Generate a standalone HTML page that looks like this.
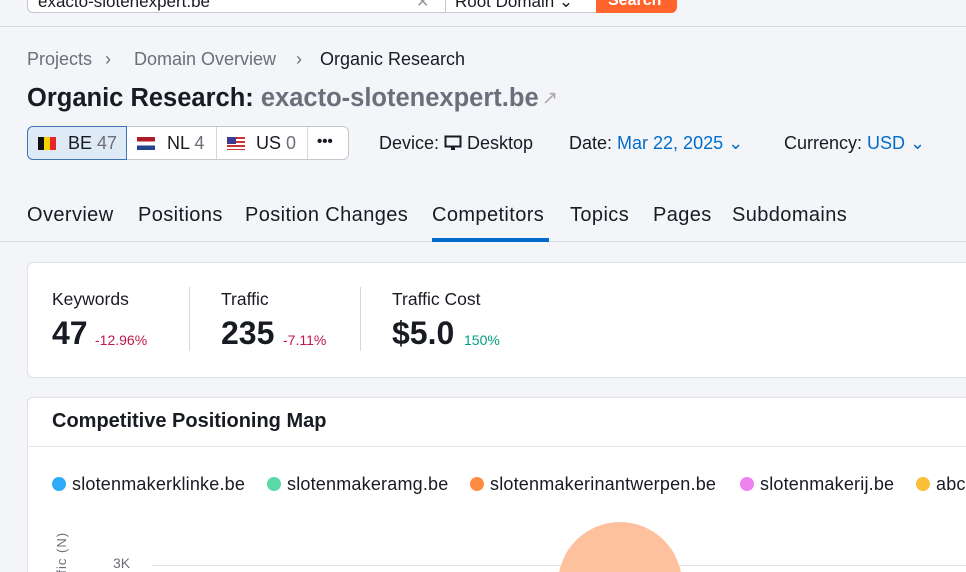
<!DOCTYPE html>
<html><head><style>
*{margin:0;padding:0;box-sizing:border-box}
html,body{width:966px;height:572px;overflow:hidden}
body{background:#f4f5f9;font-family:"Liberation Sans",sans-serif;color:#191b23;position:relative}
.a{position:absolute;white-space:nowrap}
.gray{color:#6c6e79}
.blue{color:#006dca}
.tab{position:absolute;top:204px;font-size:20px;letter-spacing:0.4px;white-space:nowrap}
.dot{position:absolute;top:477px;width:14px;height:14px;border-radius:50%}
.lg{position:absolute;top:474px;font-size:18px;letter-spacing:0.2px;white-space:nowrap}
</style></head><body>
<div class="a" style="left:27px;top:-14px;width:419px;height:27px;background:#fff;border:1px solid #c4c7cf;border-radius:0 0 0 6px"></div>
<div class="a" style="left:38px;top:-8px;font-size:17px">exacto-slotenexpert.be</div>
<div class="a" style="left:416px;top:-8px;font-size:16px;color:#999">✕</div>
<div class="a" style="left:445px;top:-14px;width:152px;height:27px;background:#fff;border:1px solid #c4c7cf"></div>
<div class="a" style="left:455px;top:-8px;font-size:17px">Root Domain ⌄</div>
<div class="a" style="left:596px;top:-14px;width:81px;height:27px;background:#ff642d;border-radius:0 0 6px 0;color:#fff;font-weight:bold;font-size:16px;padding:6px 0 0 12px">Search</div>
<div class="a" style="left:0;top:26px;width:966px;height:1px;background:#d6d8de"></div>

<div class="a gray" style="left:27px;top:49px;font-size:18px">Projects</div>
<div class="a gray" style="left:105px;top:49px;font-size:18px">›</div>
<div class="a gray" style="left:134px;top:49px;font-size:18px">Domain Overview</div>
<div class="a gray" style="left:296px;top:49px;font-size:18px">›</div>
<div class="a" style="left:320px;top:49px;font-size:18px">Organic Research</div>
<div class="a" style="left:27px;top:84px;font-size:25.5px;font-weight:bold">Organic Research: <span class="gray">exacto-slotenexpert.be</span></div>
<div class="a" style="left:542px;top:87px;color:#aaa;font-size:19px">↗</div>

<div class="a" style="left:27px;top:126px;width:322px;height:34px;background:#fff;border:1px solid #c4c7cf;border-radius:6px"></div>
<div class="a" style="left:27px;top:126px;width:100px;height:34px;background:#dfeaf7;border:1px solid #3f75b5;border-radius:6px 0 0 6px"></div>
<div class="a" style="left:216px;top:127px;width:1px;height:32px;background:#d6d8de"></div>
<div class="a" style="left:307px;top:127px;width:1px;height:32px;background:#d6d8de"></div>
<div class="a" style="left:38px;top:137px;width:18px;height:13px;background:linear-gradient(90deg,#111 33%,#f5d000 33% 66%,#e3262b 66%)"></div>
<div class="a" style="left:68px;top:133px;font-size:18px">BE <span class="gray">47</span></div>
<div class="a" style="left:137px;top:137px;width:18px;height:13px;background:linear-gradient(#ae1c28 33%,#fff 33% 66%,#21468b 66%)"></div>
<div class="a" style="left:167px;top:133px;font-size:18px">NL <span class="gray">4</span></div>
<div class="a" style="left:227px;top:137px;width:18px;height:13px;background:repeating-linear-gradient(#c33 0 2px,#fff 2px 4px)"></div>
<div class="a" style="left:227px;top:137px;width:9px;height:7px;background:#3c3b8e"></div>
<div class="a" style="left:256px;top:133px;font-size:18px">US <span class="gray">0</span></div>
<div class="a" style="left:317px;top:133px;font-size:15px;font-weight:bold">•••</div>

<div class="a" style="left:379px;top:133px;font-size:18px">Device: <svg width="18" height="16" viewBox="0 0 18 16" style="vertical-align:-2px"><rect x="1.5" y="1.5" width="15" height="10" fill="none" stroke="#191b23" stroke-width="2"/><rect x="7" y="12" width="4" height="3" fill="#191b23"/></svg> Desktop</div>
<div class="a" style="left:569px;top:133px;font-size:18px">Date: <span class="blue">Mar 22, 2025 ⌄</span></div>
<div class="a" style="left:784px;top:133px;font-size:18px">Currency: <span class="blue">USD ⌄</span></div>

<div class="tab" style="left:27px">Overview</div>
<div class="tab" style="left:138px">Positions</div>
<div class="tab" style="left:245px">Position Changes</div>
<div class="tab" style="left:432px">Competitors</div>
<div class="tab" style="left:570px">Topics</div>
<div class="tab" style="left:653px">Pages</div>
<div class="tab" style="left:732px">Subdomains</div>
<div class="a" style="left:0;top:241px;width:966px;height:1px;background:#d6d8de"></div>
<div class="a" style="left:432px;top:238px;width:117px;height:4px;background:#006dca"></div>

<div class="a" style="left:27px;top:262px;width:950px;height:116px;background:#fff;border:1px solid #dfe1e6;border-radius:6px"></div>
<div class="a" style="left:52px;top:289px;font-size:17.5px">Keywords</div>
<div class="a" style="left:52px;top:315px;font-size:32px;font-weight:bold">47</div>
<div class="a" style="left:95px;top:332px;font-size:14px;color:#c0174a">-12.96%</div>
<div class="a" style="left:189px;top:287px;width:1px;height:64px;background:#d6d8de"></div>
<div class="a" style="left:221px;top:289px;font-size:17.5px">Traffic</div>
<div class="a" style="left:221px;top:315px;font-size:32px;font-weight:bold">235</div>
<div class="a" style="left:283px;top:332px;font-size:14px;color:#c0174a">-7.11%</div>
<div class="a" style="left:360px;top:287px;width:1px;height:64px;background:#d6d8de"></div>
<div class="a" style="left:392px;top:289px;font-size:17.5px">Traffic Cost</div>
<div class="a" style="left:392px;top:315px;font-size:32px;font-weight:bold">$5.0</div>
<div class="a" style="left:464px;top:332px;font-size:14px;color:#009f81">150%</div>

<div class="a" style="left:27px;top:397px;width:950px;height:200px;background:#fff;border:1px solid #dfe1e6;border-radius:6px;overflow:hidden">
 <div style="position:absolute;left:0;top:48px;width:100%;height:1px;background:#e4e6eb"></div>
 <div style="position:absolute;left:124px;top:167px;width:830px;height:1px;background:#dfe1e6"></div>
 <div style="position:absolute;left:530px;top:124px;width:124px;height:124px;border-radius:50%;background:#fdc29d"></div>
</div>
<div class="a" style="left:52px;top:410px;font-size:20px;font-weight:bold">Competitive Positioning Map</div>
<div class="dot" style="left:52px;background:#2eaaf8"></div><div class="lg" style="left:72px">slotenmakerklinke.be</div>
<div class="dot" style="left:267px;background:#5ad8a6"></div><div class="lg" style="left:287px">slotenmakeramg.be</div>
<div class="dot" style="left:470px;background:#ff8c43"></div><div class="lg" style="left:490px">slotenmakerinantwerpen.be</div>
<div class="dot" style="left:740px;background:#ee82ee"></div><div class="lg" style="left:760px">slotenmakerij.be</div>
<div class="dot" style="left:916px;background:#fbbd3a"></div><div class="lg" style="left:936px">abc</div>
<div class="a gray" style="left:113px;top:555px;font-size:14px">3K</div>
<div class="a gray" style="left:54px;top:600px;font-size:13px;letter-spacing:1px;transform:rotate(-90deg);transform-origin:0 0">Traffic (N)</div>
</body></html>
